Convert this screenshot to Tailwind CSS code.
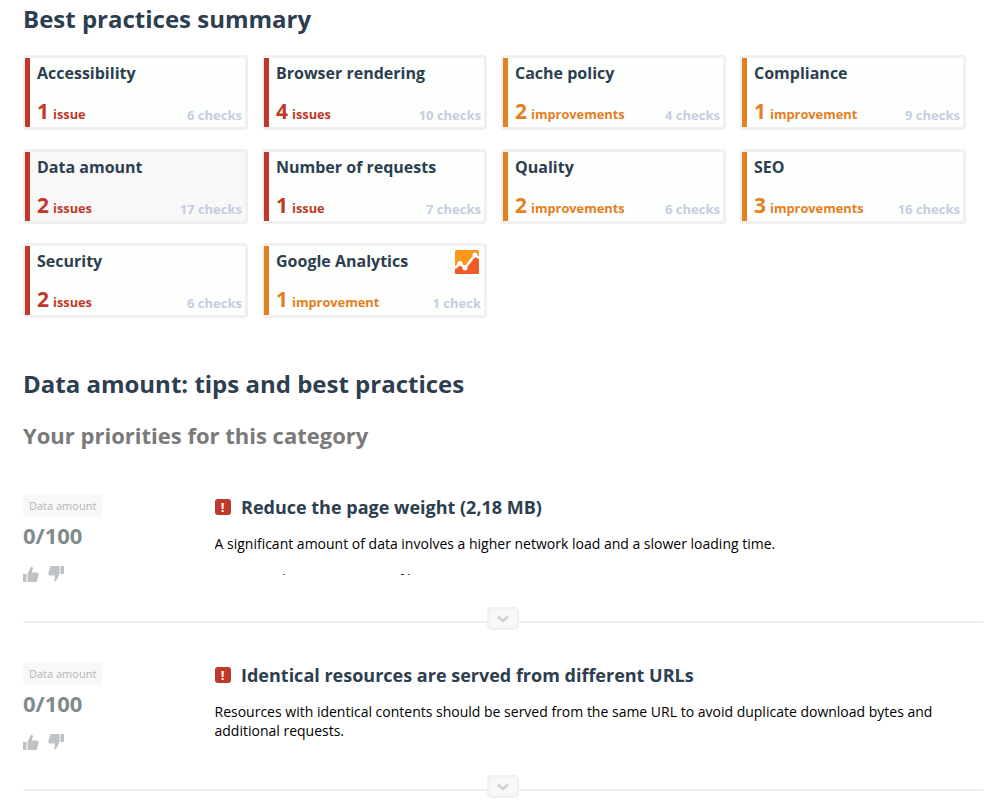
<!DOCTYPE html>
<html lang="en">
<head>
  <meta charset="UTF-8" />
  <title>Best practices</title>
  <script src="https://cdn.jsdelivr.net/npm/@tailwindcss/browser@4"></script>
</head>
<body class="bg-white font-['Open_Sans',sans-serif] overflow-hidden h-[805px]">
  <main class="pl-[23px] pr-[17px]">
    <h2 class="text-[24px] leading-[33px] font-bold text-[#2c3e50] pt-[2px] mb-[20px]">Best practices summary</h2>

    <!-- Summary cards -->
    <div class="grid grid-cols-[225px_225px_225px_226px] gap-x-[14px] gap-y-[19px] auto-rows-[75px]">
      <div class="flex border-[3px] border-[#f0f0f0] rounded-[4px] bg-[#fdfffc]">
        <div class="w-[5px] bg-[#c0392b] -ml-[1px]"></div>
        <div class="flex-1 pl-[7px] pr-[3px] flex flex-col justify-between">
          <p class="text-[16px] leading-[22px] font-bold text-[#2c3e50] pt-[4px] h-[26px]">Accessibility</p>
          <div class="flex items-baseline justify-between pb-[2px]">
            <p class="text-[#c0392b] font-bold text-[12.8px]"><span class="text-[21px] leading-[28px] mr-[4px]">1</span>issue</p>
            <span class="text-[13px] font-bold text-[#c5cde0] translate-y-px">6 checks</span>
          </div>
        </div>
      </div>
      <div class="flex border-[3px] border-[#f0f0f0] rounded-[4px] bg-[#fdfffc]">
        <div class="w-[5px] bg-[#c0392b] -ml-[1px]"></div>
        <div class="flex-1 pl-[7px] pr-[3px] flex flex-col justify-between">
          <p class="text-[16px] leading-[22px] font-bold text-[#2c3e50] pt-[4px] h-[26px]">Browser rendering</p>
          <div class="flex items-baseline justify-between pb-[2px]">
            <p class="text-[#c0392b] font-bold text-[12.8px]"><span class="text-[21px] leading-[28px] mr-[4px]">4</span>issues</p>
            <span class="text-[13px] font-bold text-[#c5cde0] translate-y-px">10 checks</span>
          </div>
        </div>
      </div>
      <div class="flex border-[3px] border-[#f0f0f0] rounded-[4px] bg-[#fdfffc]">
        <div class="w-[5px] bg-[#e67e22] -ml-[1px]"></div>
        <div class="flex-1 pl-[7px] pr-[3px] flex flex-col justify-between">
          <p class="text-[16px] leading-[22px] font-bold text-[#2c3e50] pt-[4px] h-[26px]">Cache policy</p>
          <div class="flex items-baseline justify-between pb-[2px]">
            <p class="text-[#e67e22] font-bold text-[12.8px]"><span class="text-[21px] leading-[28px] mr-[4px]">2</span>improvements</p>
            <span class="text-[13px] font-bold text-[#c5cde0] translate-y-px">4 checks</span>
          </div>
        </div>
      </div>
      <div class="flex border-[3px] border-[#f0f0f0] rounded-[4px] bg-[#fdfffc]">
        <div class="w-[5px] bg-[#e67e22] -ml-[1px]"></div>
        <div class="flex-1 pl-[7px] pr-[3px] flex flex-col justify-between">
          <p class="text-[16px] leading-[22px] font-bold text-[#2c3e50] pt-[4px] h-[26px]">Compliance</p>
          <div class="flex items-baseline justify-between pb-[2px]">
            <p class="text-[#e67e22] font-bold text-[12.8px]"><span class="text-[21px] leading-[28px] mr-[4px]">1</span>improvement</p>
            <span class="text-[13px] font-bold text-[#c5cde0] translate-y-px">9 checks</span>
          </div>
        </div>
      </div>

      <div class="flex border-[3px] border-[#f0f0f0] rounded-[4px] bg-[#f8f8f8]">
        <div class="w-[5px] bg-[#c0392b] -ml-[1px]"></div>
        <div class="flex-1 pl-[7px] pr-[3px] flex flex-col justify-between">
          <p class="text-[16px] leading-[22px] font-bold text-[#2c3e50] pt-[4px] h-[26px]">Data amount</p>
          <div class="flex items-baseline justify-between pb-[2px]">
            <p class="text-[#c0392b] font-bold text-[12.8px]"><span class="text-[21px] leading-[28px] mr-[4px]">2</span>issues</p>
            <span class="text-[13px] font-bold text-[#c5cde0] translate-y-px">17 checks</span>
          </div>
        </div>
      </div>
      <div class="flex border-[3px] border-[#f0f0f0] rounded-[4px] bg-[#fdfffc]">
        <div class="w-[5px] bg-[#c0392b] -ml-[1px]"></div>
        <div class="flex-1 pl-[7px] pr-[3px] flex flex-col justify-between">
          <p class="text-[16px] leading-[22px] font-bold text-[#2c3e50] pt-[4px] h-[26px]">Number of requests</p>
          <div class="flex items-baseline justify-between pb-[2px]">
            <p class="text-[#c0392b] font-bold text-[12.8px]"><span class="text-[21px] leading-[28px] mr-[4px]">1</span>issue</p>
            <span class="text-[13px] font-bold text-[#c5cde0] translate-y-px">7 checks</span>
          </div>
        </div>
      </div>
      <div class="flex border-[3px] border-[#f0f0f0] rounded-[4px] bg-[#fdfffc]">
        <div class="w-[5px] bg-[#e67e22] -ml-[1px]"></div>
        <div class="flex-1 pl-[7px] pr-[3px] flex flex-col justify-between">
          <p class="text-[16px] leading-[22px] font-bold text-[#2c3e50] pt-[4px] h-[26px]">Quality</p>
          <div class="flex items-baseline justify-between pb-[2px]">
            <p class="text-[#e67e22] font-bold text-[12.8px]"><span class="text-[21px] leading-[28px] mr-[4px]">2</span>improvements</p>
            <span class="text-[13px] font-bold text-[#c5cde0] translate-y-px">6 checks</span>
          </div>
        </div>
      </div>
      <div class="flex border-[3px] border-[#f0f0f0] rounded-[4px] bg-[#fdfffc]">
        <div class="w-[5px] bg-[#e67e22] -ml-[1px]"></div>
        <div class="flex-1 pl-[7px] pr-[3px] flex flex-col justify-between">
          <p class="text-[16px] leading-[22px] font-bold text-[#2c3e50] pt-[4px] h-[26px]">SEO</p>
          <div class="flex items-baseline justify-between pb-[2px]">
            <p class="text-[#e67e22] font-bold text-[12.8px]"><span class="text-[21px] leading-[28px] mr-[4px]">3</span>improvements</p>
            <span class="text-[13px] font-bold text-[#c5cde0] translate-y-px">16 checks</span>
          </div>
        </div>
      </div>

      <div class="flex border-[3px] border-[#f0f0f0] rounded-[4px] bg-[#fdfffc]">
        <div class="w-[5px] bg-[#c0392b] -ml-[1px]"></div>
        <div class="flex-1 pl-[7px] pr-[3px] flex flex-col justify-between">
          <p class="text-[16px] leading-[22px] font-bold text-[#2c3e50] pt-[4px] h-[26px]">Security</p>
          <div class="flex items-baseline justify-between pb-[2px]">
            <p class="text-[#c0392b] font-bold text-[12.8px]"><span class="text-[21px] leading-[28px] mr-[4px]">2</span>issues</p>
            <span class="text-[13px] font-bold text-[#c5cde0] translate-y-px">6 checks</span>
          </div>
        </div>
      </div>
      <div class="flex border-[3px] border-[#f0f0f0] rounded-[4px] bg-[#fdfffc]">
        <div class="w-[5px] bg-[#e67e22] -ml-[1px]"></div>
        <div class="flex-1 pl-[7px] pr-[3px] flex flex-col justify-between relative">
          <p class="text-[16px] leading-[22px] font-bold text-[#2c3e50] pt-[4px] h-[26px]">Google Analytics</p>
          <svg class="absolute top-[4px] right-[5px]" width="24" height="24" viewBox="0 0 24 24">
            <rect width="24" height="24" rx="1.500" fill="#fa981d"/>
            <path d="M0 18 L5 13.500 L10 18 L20 5 L24 8 V22.500 A1.500 1.500 0 0 1 22.500 24 H1.500 A1.500 1.500 0 0 1 0 22.500 Z" fill="#f15a24"/>
            <path d="M0 18 L5 13.500 L10 18 L20 5 L24 8" fill="none" stroke="#fff" stroke-width="2.500"/>
            <circle cx="5" cy="13.500" r="2.500" fill="#fff"/><circle cx="10" cy="18" r="2.500" fill="#fff"/><circle cx="20" cy="5" r="2.500" fill="#fff"/>
          </svg>
          <div class="flex items-baseline justify-between pb-[2px]">
            <p class="text-[#e67e22] font-bold text-[12.8px]"><span class="text-[21px] leading-[28px] mr-[4px]">1</span>improvement</p>
            <span class="text-[13px] font-bold text-[#c5cde0] translate-y-px">1 check</span>
          </div>
        </div>
      </div>
    </div>

    <h2 class="text-[24px] leading-[33px] font-bold text-[#2c3e50] mt-[49px]">Data amount: tips and best practices</h2>
    <h3 class="text-[22px] leading-[30px] font-bold text-[#7a7a7a] mt-[20px]">Your priorities for this category</h3>

    <!-- Rule 1 -->
    <section class="relative mt-[44px] h-[129px] border-b-2 border-[#eeeeee] flex">
      <div class="w-[191.5px] shrink-0">
        <span class="block w-fit bg-[#f8f8f8] rounded-[3px] px-[6px] text-[11px] leading-[23px] text-[#b5b5b5]">Data amount</span>
        <p class="text-[22px] leading-[30px] font-bold text-[#7f8c8d] mt-[3px]">0/100</p>
        <div class="flex gap-[9px] mt-[16px]">
          <svg width="16" height="17" viewBox="0 0 16 17" fill="#bdc3c7"><path d="M0 8h3.500v8H0zM4.500 8 7.500 1.500c.3-1 2.300-1 2.300.8L9 6.500h5c1.500 0 2 1.200 1.700 2.200L14 15c-.3.700-.8 1-1.500 1H6c-.8 0-1.500-.5-1.500-1z"/></svg>
          <svg width="16" height="17" viewBox="0 0 16 17" fill="#bdc3c7" class="-mt-[1px]"><path d="M16 9h-3.500V1H16zM11.500 9 8.500 15.500c-.3 1-2.300 1-2.300-.8L7 10.500H2C.5 10.500 0 9.300.3 8.300L2 2c.3-.7.8-1 1.500-1H10c.8 0 1.500.5 1.500 1z"/></svg>
        </div>
      </div>
      <div class="flex-1">
        <div class="flex items-center gap-[10.500px] mt-[1px]">
          <span class="w-[16px] h-[16px] rounded-[3px] bg-[#c0392b] text-white text-[13px] leading-[16px] font-bold text-center">!</span>
          <h4 class="text-[18px] leading-[24px] font-bold text-[#2c3e50]">Reduce the page weight (2,18 MB)</h4>
        </div>
        <div class="h-[42px] overflow-hidden mt-[14px] text-[14px] leading-[21px] text-black">
          <p>A significant amount of data involves a higher network load and a slower loading time.</p>
          <p class="mt-[15px]">Try using the most compact files.</p>
        </div>
      </div>
      <button class="absolute left-[464px] -bottom-[9px] w-[32px] h-[23px] rounded-[5px] border-2 border-[#eef0f2] bg-[#f6f7f9] flex items-center justify-center">
        <svg width="12" height="8" viewBox="0 0 12 8" fill="none" stroke="#cfcfcf" stroke-width="2.500"><path d="M1 1.500 6 6l5-4.500"/></svg>
      </button>
    </section>

    <!-- Rule 2 -->
    <section class="relative mt-[39px] h-[129px] border-b-2 border-[#eeeeee] flex">
      <div class="w-[191.5px] shrink-0">
        <span class="block w-fit bg-[#f8f8f8] rounded-[3px] px-[6px] text-[11px] leading-[23px] text-[#b5b5b5]">Data amount</span>
        <p class="text-[22px] leading-[30px] font-bold text-[#7f8c8d] mt-[3px]">0/100</p>
        <div class="flex gap-[9px] mt-[16px]">
          <svg width="16" height="17" viewBox="0 0 16 17" fill="#bdc3c7"><path d="M0 8h3.500v8H0zM4.500 8 7.500 1.500c.3-1 2.300-1 2.300.8L9 6.500h5c1.500 0 2 1.200 1.700 2.200L14 15c-.3.700-.8 1-1.500 1H6c-.8 0-1.500-.5-1.500-1z"/></svg>
          <svg width="16" height="17" viewBox="0 0 16 17" fill="#bdc3c7" class="-mt-[1px]"><path d="M16 9h-3.500V1H16zM11.500 9 8.500 15.500c-.3 1-2.300 1-2.300-.8L7 10.500H2C.5 10.500 0 9.300.3 8.300L2 2c.3-.7.8-1 1.500-1H10c.8 0 1.500.5 1.500 1z"/></svg>
        </div>
      </div>
      <div class="flex-1">
        <div class="flex items-center gap-[10.500px] mt-[1px]">
          <span class="w-[16px] h-[16px] rounded-[3px] bg-[#c0392b] text-white text-[13px] leading-[16px] font-bold text-center">!</span>
          <h4 class="text-[18px] leading-[24px] font-bold text-[#2c3e50]">Identical resources are served from different URLs</h4>
        </div>
        <p class="mt-[15px] text-[14px] leading-[19px] text-black">Resources with identical contents should be served from the same URL to avoid duplicate download bytes and additional requests.</p>
      </div>
      <button class="absolute left-[464px] -bottom-[9px] w-[32px] h-[23px] rounded-[5px] border-2 border-[#eef0f2] bg-[#f6f7f9] flex items-center justify-center">
        <svg width="12" height="8" viewBox="0 0 12 8" fill="none" stroke="#cfcfcf" stroke-width="2.500"><path d="M1 1.500 6 6l5-4.500"/></svg>
      </button>
    </section>
  </main>
</body>
</html>
